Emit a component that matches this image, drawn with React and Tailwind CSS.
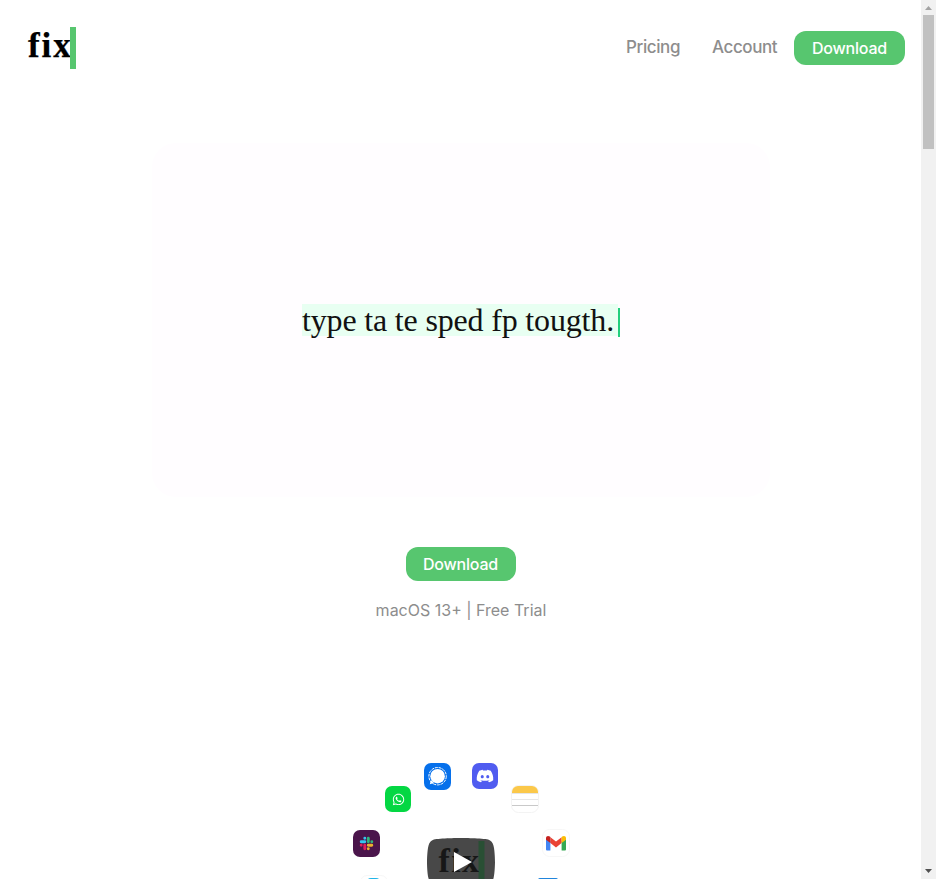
import React from "react";
import { FaDiscord, FaWhatsapp } from "react-icons/fa";

const inter = "font-['Inter',sans-serif]";
const serif = "font-['Liberation_Serif',serif]";

function DownloadButton({ className = "" }) {
  return (
    <button
      className={`${inter} flex h-[34px] items-center justify-center rounded-[12px] bg-[#57c66f] text-[16px] leading-none font-medium tracking-[-0.2px] text-white ${className}`}
    >
      Download
    </button>
  );
}

function Header() {
  return (
    <header className="flex h-[96px] items-start justify-between pr-4 pl-7">
      <div className="mt-[27px] flex h-[42px]">
        <span className={`${serif} w-[42px] text-[35px] leading-[38px] font-bold tracking-[1.9px] whitespace-nowrap text-black [-webkit-text-stroke:0.25px_black]`}>
          fix
        </span>
        <span className="h-[42px] w-[6px] bg-[#57c66f]" />
      </div>
      <nav className={`${inter} mt-[31px] flex items-center text-[17px] font-medium tracking-[-0.4px] text-[#8d8d8d]`}>
        <a className="mr-8 w-[54px] whitespace-nowrap">Pricing</a>
        <a className="mr-4 w-[66px] whitespace-nowrap">Account</a>
        <DownloadButton className="w-[111px]" />
      </nav>
    </header>
  );
}

function SignalIcon() {
  return (
    <svg viewBox="0 0 27 27" className="size-[27px]">
      <rect width="27" height="27" rx="7" fill="#0670eb" />
      <circle cx="13.6" cy="13.2" r="7.3" fill="#fff" />
      <path d="M7 17 5.8 21.2 10 20Z" fill="#fff" />
      <circle cx="13.6" cy="13.2" r="8.7" fill="none" stroke="#fff" strokeWidth="1" strokeDasharray="3 .8" />
    </svg>
  );
}

function SlackIcon() {
  return (
    <svg viewBox="0 0 27 27" className="size-[27px]">
      <rect width="27" height="27" rx="7" fill="#4a154b" />
      <g strokeWidth="2.9" strokeLinecap="round">
        <path d="M11.8 8.2v0M8.2 11.8h3.6" stroke="#36c5f0" />
        <path d="M15.3 8.2v3.6M18.8 11.8v0" stroke="#2eb67d" />
        <path d="M11.8 15.3v3.5M8.2 15.3v0" stroke="#e01e5a" />
        <path d="M15.3 15.3h3.5M15.3 18.8v0" stroke="#ecb22e" />
      </g>
    </svg>
  );
}

function NotesIcon() {
  return (
    <svg viewBox="0 0 28 28" className="size-[28px]">
      <rect x=".5" y=".5" width="27" height="27" rx="7" fill="#fff" stroke="#f3f3f3" />
      <path d="M1 8V7a6 6 0 0 1 6-6h14a6 6 0 0 1 6 6v1Z" fill="#fbc84a" />
      <path d="M1 8.5h26M1 14.5h26" stroke="#e6e6e6" />
      <path d="M1 20.5h26" stroke="#c9c9c9" />
    </svg>
  );
}

function GmailIcon() {
  return (
    <svg viewBox="0 0 28 28" className="size-[28px]">
      <rect x=".5" y=".5" width="27" height="27" rx="7" fill="#fff" stroke="#f7f7f7" />
      <path d="M4 9v11.5q0 1 1 1h3.4V12Z" fill="#4285f4" />
      <path d="M24 9v11.5q0 1-1 1h-3.4V12Z" fill="#34a853" />
      <path d="M8.4 8.3 14 12.6l5.6-4.3v5.8L14 18.4l-5.6-4.3Z" fill="#ea4335" />
      <path d="M4 9.2c0-2.2 2.2-3 3.8-1.6l.6.5v6L4 10.8Z" fill="#c5221f" />
      <path d="M24 9.2c0-2.2-2.2-3-3.8-1.6l-.6.5v6l4.4-3.3Z" fill="#fbbc04" />
    </svg>
  );
}

function AppRing() {
  return (
    <section className="relative mx-auto mt-auto h-[119px] w-[261px] overflow-hidden">
      <div className="absolute top-[2.5px] left-[93.5px]"><SignalIcon /></div>
      <div className="absolute top-[3px] left-[142px] flex size-[26px] items-center justify-center rounded-[7px] bg-[#505cf0]">
        <FaDiscord className="size-[18px] text-white" />
      </div>
      <div className="absolute top-[26px] left-[55px] flex size-[26px] items-center justify-center rounded-[7px] bg-[#04d743]">
        <FaWhatsapp className="size-[13px] text-white" />
      </div>
      <div className="absolute top-[25px] left-[180.5px]"><NotesIcon /></div>
      <div className="absolute top-[70px] left-[23px]"><SlackIcon /></div>
      <div className="absolute top-[69px] left-[211.5px]"><GmailIcon /></div>
      <div className="absolute top-[115px] left-[30px] h-[28px] w-[28px] rounded-[7px] border border-[#f7f7f7]" />
      <div className="absolute top-[118px] left-[37px] h-[8px] w-[13px] rounded-[4px] bg-[#20b5e8]" />
      <div className="absolute top-[118px] left-[208px] h-[8px] w-[20px] rounded-[2px] bg-[#2185dc]" />
      <svg viewBox="0 0 68 48" className="absolute top-[78px] left-[97px] h-[48px] w-[68px]">
        <path
          d="M66.52 7.74c-.78-2.93-2.49-5.41-5.42-6.19C55.79.13 34 0 34 0S12.21.13 6.9 1.55C3.97 2.33 2.27 4.81 1.48 7.74.06 13.05 0 24 0 24s.06 10.95 1.48 16.26c.78 2.93 2.49 5.41 5.42 6.19C12.21 47.87 34 48 34 48s21.79-.13 27.1-1.55c2.93-.78 4.64-3.26 5.42-6.19C67.94 34.95 68 24 68 24s-.06-10.95-1.48-16.26z"
          fill="#484848"
        />
        <rect x="51.5" y="3" width="6" height="42" fill="#294f34" />
        <text x="11.5" y="33.5" fontFamily="Liberation Serif, serif" fontWeight="700" fontSize="34" letterSpacing="1.4" fill="#171717">
          fix
        </text>
        <path d="M27 14v20l18-10Z" fill="#fff" />
      </svg>
    </section>
  );
}

function Scrollbar() {
  return (
    <aside className="flex h-full w-[15px] shrink-0 flex-col items-center bg-[#f1f1f1]">
      <svg viewBox="0 0 15 15" className="h-[15px] w-[15px] shrink-0">
        <path d="M4 10h7L7.5 6Z" fill="#a3a3a3" />
      </svg>
      <div className="h-[134px] w-[11px] bg-[#c1c1c1]" />
      <svg viewBox="0 0 15 15" className="mt-auto h-[15px] w-[15px] shrink-0">
        <path d="M4 5h7L7.5 9Z" fill="#505050" />
      </svg>
    </aside>
  );
}

export default function App() {
  return (
    <div className="flex h-[879px] w-[936px] overflow-hidden bg-white">
      <main className="flex h-full w-[921px] flex-col">
        <Header />
        <section className="mx-auto mt-[47px] flex h-[354px] w-[618px] justify-center rounded-[24px] bg-[#fffdff]">
          <div className="mt-[161px] ml-px flex h-[33px]">
            <span className={`${serif} h-[32px] w-[316px] bg-[#e8fff2] text-[32px] leading-[32px] tracking-[-0.17px] whitespace-nowrap text-[#111]`}>
              type ta te sped fp tougth.
            </span>
            <span className="mt-1 h-[29px] w-[2px] bg-[#22cf7d]" />
          </div>
        </section>
        <section className="mt-[50px] flex flex-col items-center">
          <DownloadButton className="w-[110px]" />
          <p className={`${inter} mt-[17px] ml-px text-[16px] leading-6 text-[#8d8d8d]`}>macOS 13+ | Free Trial</p>
        </section>
        <AppRing />
      </main>
      <Scrollbar />
    </div>
  );
}
